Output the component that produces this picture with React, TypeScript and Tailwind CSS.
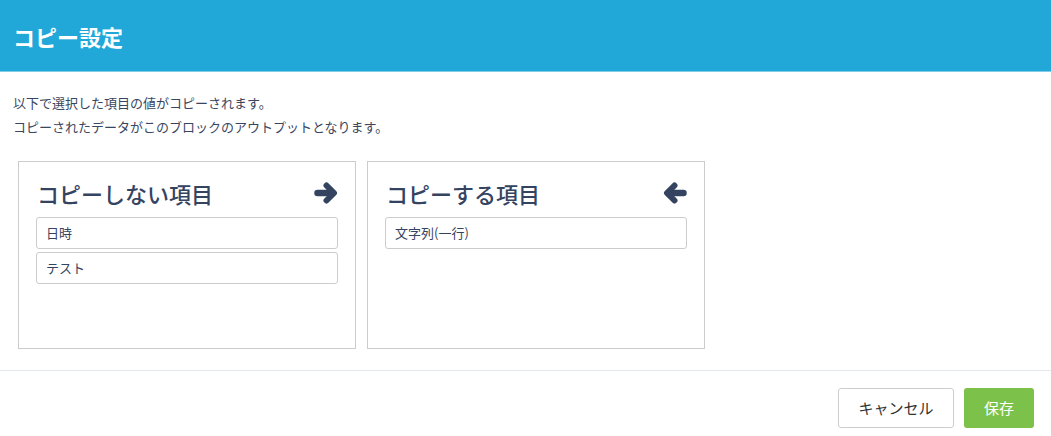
import React from 'react';

interface ColumnProps {
  title: string;
  direction: 'right' | 'left';
  items: string[];
}

// heavy arrow like the old font-awesome glyph
const HeavyArrow: React.FC<{ direction: 'right' | 'left' }> = ({ direction }) => (
  <svg
    viewBox="0 0 24 24"
    className={`w-[24px] h-[24px] text-[#34435f] ${direction === 'left' ? '-scale-x-100' : ''}`}
    fill="none"
    stroke="currentColor"
    strokeLinecap="round"
    strokeLinejoin="round"
  >
    <path d="M3.5 12h15" strokeWidth="6.5" />
    <path d="M12.5 4.5 20 12l-7.5 7.5" strokeWidth="6" />
  </svg>
);

const Column: React.FC<ColumnProps> = ({ title, direction, items }) => {
  return (
    <div className="w-[338px] h-[188px] border border-[#cccccc] bg-white px-[17px] pt-[11px]">
      <div className="flex items-center justify-between h-[40px] pl-[1px]">
        <h3 className="text-[22px] font-medium leading-none text-[#34435f]">{title}</h3>
        <HeavyArrow direction={direction} />
      </div>
      <div className="mt-[4px] flex flex-col gap-[3px]">
        {items.map((item) => (
          <div
            key={item}
            className="h-[32px] flex items-center px-[9px] border border-[#cccccc] rounded-[3px] text-[13px] text-[#34435f]"
          >
            {item}
          </div>
        ))}
      </div>
    </div>
  );
};

export default function App() {
  return (
    <div
      className="w-[1051px] h-[436px] bg-white"
      style={{ fontFamily: '"Noto Sans CJK JP", "Noto Sans", sans-serif' }}
    >
      <div className="h-[72px] bg-[#21a7d8] flex items-center px-[13px] border-b border-[#7fcde9]">
        <h1 className="text-[22px] font-bold text-white leading-none">コピー設定</h1>
      </div>

      <div className="px-[13px] pt-[19px] text-[13px] leading-[24px] text-[#3a4660]">
        <p>以下で選択した項目の値がコピーされます。</p>
        <p>コピーされたデータがこのブロックのアウトプットとなります。</p>
      </div>

      <div className="flex gap-[11px] pl-[18px] pt-[22px]">
        <Column title="コピーしない項目" direction="right" items={['日時', 'テスト']} />
        <Column title="コピーする項目" direction="left" items={['文字列(一行)']} />
      </div>

      <div className="mt-[21px] border-t border-[#e3e8ef] flex justify-end gap-[10px] pt-[17px] pr-[17px]">
        <button className="w-[116px] h-[40px] border border-[#cccccc] rounded-[3px] bg-white text-[15px] text-[#333333]">
          キャンセル
        </button>
        <button className="w-[70px] h-[40px] rounded-[3px] bg-[#7cc24a] text-[15px] text-white">
          保存
        </button>
      </div>
    </div>
  );
}
